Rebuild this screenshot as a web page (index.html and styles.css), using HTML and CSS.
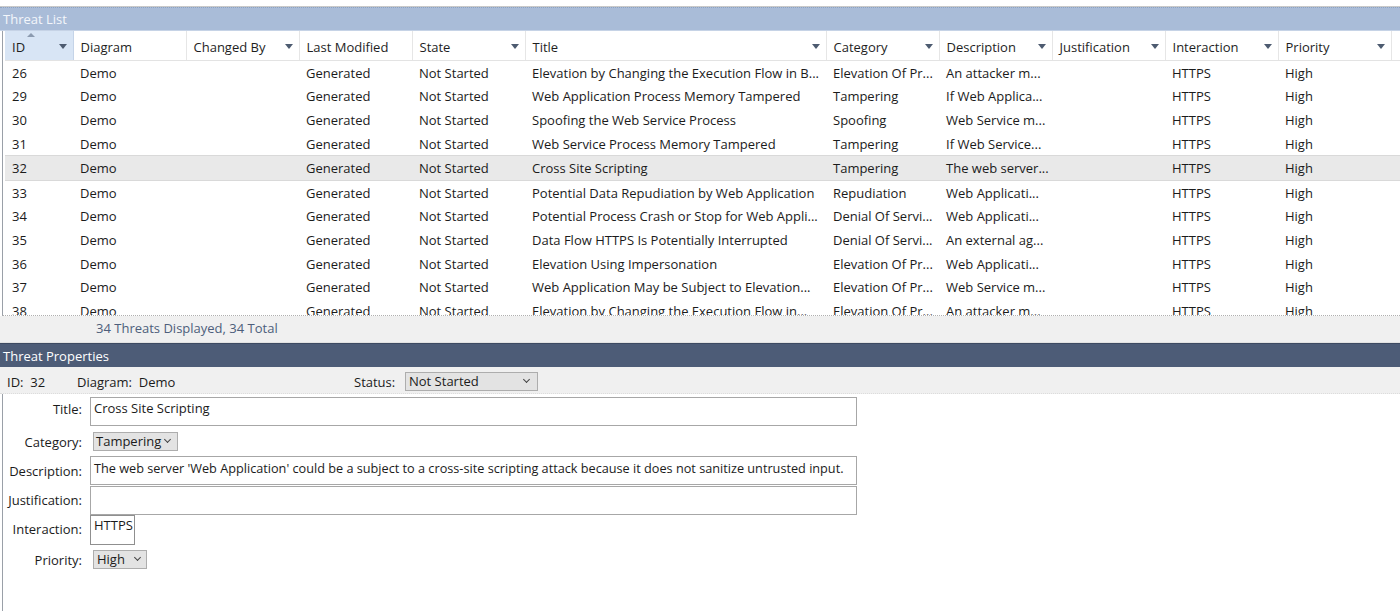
FILE: index.html
```html
<!DOCTYPE html>
<html>
<head>
<meta charset="utf-8">
<link rel="stylesheet" href="styles.css">
</head>
<body>
<div class="app">
  <div class="topstrip"></div>
  <div class="panel-title light">Threat List</div>
  <div class="grid">
    <table class="threats">
      <colgroup>
        <col class="c-id"><col class="c-std"><col class="c-std"><col class="c-std"><col class="c-std"><col class="c-title"><col class="c-std"><col class="c-std"><col class="c-std"><col class="c-std"><col class="c-std"><col>
      </colgroup>
      <thead>
        <tr>
          <th class="sorted"><span class="sortup"></span>ID<span class="dd"></span></th>
          <th>Diagram</th>
          <th>Changed By<span class="dd"></span></th>
          <th>Last Modified</th>
          <th>State<span class="dd"></span></th>
          <th>Title<span class="dd"></span></th>
          <th>Category<span class="dd"></span></th>
          <th>Description<span class="dd"></span></th>
          <th>Justification<span class="dd"></span></th>
          <th>Interaction<span class="dd"></span></th>
          <th>Priority<span class="dd"></span></th>
          <th class="filler"></th>
        </tr>
      </thead>
      <tbody>
        <tr><td>26</td><td>Demo</td><td></td><td>Generated</td><td>Not Started</td><td>Elevation by Changing the Execution Flow in B...</td><td>Elevation Of Pr...</td><td>An attacker m...</td><td></td><td>HTTPS</td><td>High</td><td></td></tr>
        <tr><td>29</td><td>Demo</td><td></td><td>Generated</td><td>Not Started</td><td>Web Application Process Memory Tampered</td><td>Tampering</td><td>If Web Applica...</td><td></td><td>HTTPS</td><td>High</td><td></td></tr>
        <tr><td>30</td><td>Demo</td><td></td><td>Generated</td><td>Not Started</td><td>Spoofing the Web Service Process</td><td>Spoofing</td><td>Web Service m...</td><td></td><td>HTTPS</td><td>High</td><td></td></tr>
        <tr><td>31</td><td>Demo</td><td></td><td>Generated</td><td>Not Started</td><td>Web Service Process Memory Tampered</td><td>Tampering</td><td>If Web Service...</td><td></td><td>HTTPS</td><td>High</td><td></td></tr>
        <tr class="selected"><td>32</td><td>Demo</td><td></td><td>Generated</td><td>Not Started</td><td>Cross Site Scripting</td><td>Tampering</td><td>The web server...</td><td></td><td>HTTPS</td><td>High</td><td></td></tr>
        <tr><td>33</td><td>Demo</td><td></td><td>Generated</td><td>Not Started</td><td>Potential Data Repudiation by Web Application</td><td>Repudiation</td><td>Web Applicati...</td><td></td><td>HTTPS</td><td>High</td><td></td></tr>
        <tr><td>34</td><td>Demo</td><td></td><td>Generated</td><td>Not Started</td><td>Potential Process Crash or Stop for Web Appli...</td><td>Denial Of Servi...</td><td>Web Applicati...</td><td></td><td>HTTPS</td><td>High</td><td></td></tr>
        <tr><td>35</td><td>Demo</td><td></td><td>Generated</td><td>Not Started</td><td>Data Flow HTTPS Is Potentially Interrupted</td><td>Denial Of Servi...</td><td>An external ag...</td><td></td><td>HTTPS</td><td>High</td><td></td></tr>
        <tr><td>36</td><td>Demo</td><td></td><td>Generated</td><td>Not Started</td><td>Elevation Using Impersonation</td><td>Elevation Of Pr...</td><td>Web Applicati...</td><td></td><td>HTTPS</td><td>High</td><td></td></tr>
        <tr><td>37</td><td>Demo</td><td></td><td>Generated</td><td>Not Started</td><td>Web Application May be Subject to Elevation...</td><td>Elevation Of Pr...</td><td>Web Service m...</td><td></td><td>HTTPS</td><td>High</td><td></td></tr>
        <tr><td>38</td><td>Demo</td><td></td><td>Generated</td><td>Not Started</td><td>Elevation by Changing the Execution Flow in...</td><td>Elevation Of Pr...</td><td>An attacker m...</td><td></td><td>HTTPS</td><td>High</td><td></td></tr>
      </tbody>
    </table>
  </div>
  <div class="statusbar">34 Threats Displayed, 34 Total</div>
  <div class="panel-title dark">Threat Properties</div>
  <div class="props-head">
    <span class="ph-id">ID:&nbsp;&nbsp;32</span>
    <span class="ph-diagram">Diagram:&nbsp;&nbsp;Demo</span>
    <span class="ph-status">Status:</span>
    <div class="combo status-combo"><span>Not Started</span><span class="chev"></span></div>
  </div>
  <div class="form">
    <div class="frow r-title"><label>Title:</label><div class="box wide tall">Cross Site Scripting</div></div>
    <div class="frow r-cat"><label>Category:</label><div class="combo cat-combo"><span>Tampering</span><span class="chev"></span></div></div>
    <div class="frow r-desc"><label>Description:</label><div class="box wide tall desc">The web server 'Web Application' could be a subject to a cross-site scripting attack because it does not sanitize untrusted input.</div></div>
    <div class="frow r-just"><label>Justification:</label><div class="box wide tall"></div></div>
    <div class="frow r-inter"><label>Interaction:</label><div class="box small tall">HTTPS</div></div>
    <div class="frow r-prio"><label>Priority:</label><div class="combo prio-combo"><span>High</span><span class="chev"></span></div></div>
  </div>
</div>
</body>
</html>
```

FILE: styles.css
```css
html, body {
  margin: 0;
  padding: 0;
  background: #ffffff;
}
body {
  font-family: "Open Sans", "Noto Sans", sans-serif;
  font-size: 13px;
  color: #1b1b1b;
  width: 1400px;
  height: 611px;
  overflow: hidden;
}
.app {
  display: flex;
  flex-direction: column;
  height: 611px;
}
.topstrip {
  height: 6px;
  border-bottom: 1px solid #c9c9c9;
  background: #fff;
}
.panel-title {
  height: 22px;
  line-height: 22px;
  padding-left: 3px;
  font-size: 13px;
}
.panel-title.light {
  background: #a9bcd8;
  color: #f3f6fb;
  border-top: 1px dotted #8ea3c2;
  border-bottom: 1px solid #c6d3e6;
}
.panel-title.dark {
  background: #4d5c77;
  color: #ffffff;
  height: 23px;
  line-height: 24px;
  border-top: 1px solid #3d4a62;
}
.grid {
  height: 284px;
  overflow: hidden;
  border-left: 1px solid #9aa0a8;
  margin-left: 2px;
  padding-left: 2px;
  background: #fff;
  border-bottom: 1px dotted #b0b0b0;
}
.threats {
  border-collapse: collapse;
  table-layout: fixed;
  width: 1395px;
}
.c-id { width: 68px; }
.c-std { width: 113px; }
.c-title { width: 301px; }
.threats th {
  position: relative;
  height: 26px;
  text-align: left;
  font-weight: normal;
  padding: 3px 0 0 7px;
  white-space: nowrap;
  overflow: hidden;
  border-right: 1px solid #e6e6e6;
  border-bottom: 1px solid #e3e3e3;
  color: #1e1e1e;
}
.threats th.sorted {
  background: #d8e5f5;
  border-right: 1px solid #c5d4e8;
}
.threats th.filler { border-right: none; }
.sortup {
  position: absolute;
  left: 22px;
  top: 2px;
  width: 0;
  height: 0;
  border-left: 4px solid transparent;
  border-right: 4px solid transparent;
  border-bottom: 4px solid #8c9bb0;
}
.dd {
  position: absolute;
  right: 6px;
  top: 13px;
  width: 0;
  height: 0;
  border-left: 4px solid transparent;
  border-right: 4px solid transparent;
  border-top: 5px solid #4d5b70;
}
.threats td {
  height: 23.6px;
  padding: 0 0 0 7px;
  white-space: nowrap;
  overflow: hidden;
  line-height: 18px;
}
.threats tr.selected td {
  background: #e9e9e9;
  border-top: 1px solid #d9d9d9;
  border-bottom: 1px solid #d9d9d9;
}
.statusbar {
  height: 26px;
  line-height: 24px;
  background: #f0f0f0;
  color: #4d5e7b;
  padding-left: 96px;
  border-bottom: 1px solid #e2e2e2;
}
.props-head {
  height: 27px;
  padding-top: 3px;
  box-sizing: border-box;
  background: #f0f0f0;
  display: flex;
  align-items: center;
  border-bottom: 1px dotted #dcdcdc;
}
.ph-id { margin-left: 7px; width: 70px; }
.ph-diagram { width: 277px; }
.ph-status { width: 51px; }
.combo {
  display: flex;
  align-items: center;
  justify-content: space-between;
  height: 17px;
  border: 1px solid #adadad;
  background: #e3e3e3;
  padding: 0 8px 0 3px;
  box-sizing: content-box;
  line-height: 17px;
}
.status-combo { width: 120px; }
.chev {
  width: 4px;
  height: 4px;
  border-right: 1px solid #444;
  border-bottom: 1px solid #444;
  transform: rotate(45deg);
  margin-top: -4px;
}
.form {
  border-left: 1px solid #9aa0a8;
  margin-left: 2px;
  flex: 1;
  padding-top: 3px;
}
.frow {
  display: flex;
  align-items: flex-start;
}
.frow label {
  width: 79px;
  text-align: right;
  padding-right: 8px;
  flex: none;
}
.box {
  background: #fff;
  border: 1px solid #a7a7a7;
  padding: 1px 3px;
  line-height: 18px;
  box-sizing: border-box;
  white-space: nowrap;
  overflow: hidden;
}
.box.desc { font-size: 12.7px; padding-top: 2px; }
.box.wide { width: 767px; }
.box.tall { height: 29px; }
.box.small { width: 45px; height: 30px; border-color: #8f8f8f; }
.r-title label { padding-top: 3px; }
.r-cat { margin-top: 6px; height: 24px; }
.r-cat label { padding-top: 1px; }
.r-cat .combo { margin-left: 3px; width: 74px; padding-right: 7px; padding-left: 2px; }
.r-desc { margin-top: 0; }
.r-desc label { padding-top: 6px; }
.r-just { margin-top: 1px; }
.r-just label { padding-top: 5px; }
.r-inter label { padding-top: 5px; }
.r-inter .box { padding-top: 0; }
.r-prio { margin-top: 5px; }
.r-prio label { padding-top: 1px; }
.r-prio .combo { margin-left: 3px; width: 43px; padding-right: 6px; }
```
